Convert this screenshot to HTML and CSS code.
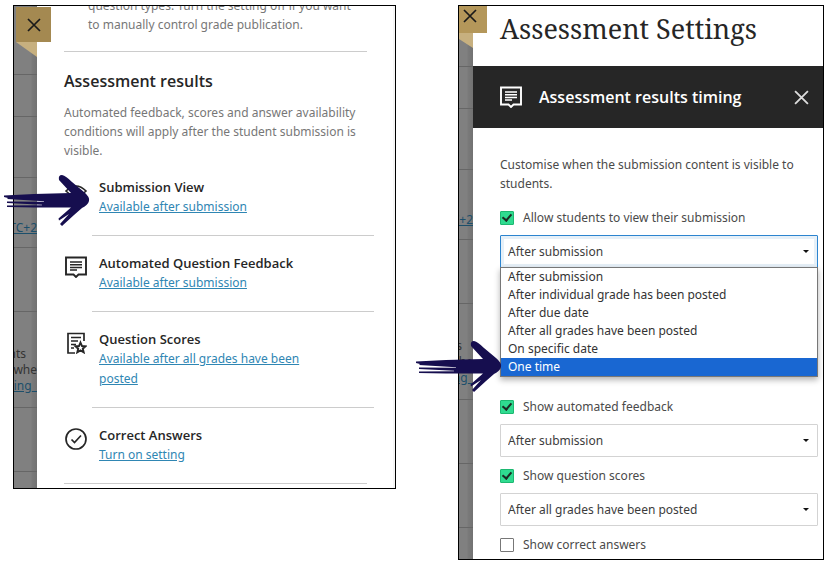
FILE: index.html
```html
<!DOCTYPE html>
<html lang="en">
<head>
  <meta charset="UTF-8">
  <meta name="viewport" content="width=device-width, initial-scale=1.0">
  <title>Assessment Settings</title>
  <link rel="stylesheet" href="styles.css">
</head>
<body>
  <svg class="sprite" aria-hidden="true">
    <symbol id="icon-arrow" viewBox="0 0 86 52">
      <path d="M0 20.500 L30 19 L67 18 L55 5 Q54 0 58 0 Q62 1 68 7 L80 17 Q86 22 85 26 Q84 30 78 33 L70 40 L58 51 L56 49 L65 39 L55 45.500 L54.500 43.500 L67 32.500 L46 32.500 L30 32.500 L3 32 L3 30.500 L38 30.300 L38 29.700 L3 28 L3 26.500 L40 26.800 L40 26.200 L3 24 L4 23 L0 22 Z"/>
    </symbol>
    <symbol id="icon-comment" viewBox="0 0 22 22">
      <path d="M1 1.500 H21 V18.500 H13.500 L11 21 L8.500 18.500 H1 Z" fill="none" stroke="currentColor" stroke-width="1.900"/>
      <path d="M5 6 H17 M5 8.700 H17 M5 11.400 H17 M5 14.100 H12" fill="none" stroke="currentColor" stroke-width="1.500"/>
    </symbol>
    <symbol id="icon-close" viewBox="0 0 14 14">
      <path d="M1 1 L13 13 M13 1 L1 13" fill="none" stroke="currentColor" stroke-width="1.700"/>
    </symbol>
  </svg>

  <main class="shots">
    <!-- Settings panel -->
    <section class="shot shot-left">
      <div class="frame">
        <div class="backdrop" aria-hidden="true">
          <div class="cell h68"></div>
          <div class="cell h42"></div>
          <div class="cell h60"></div>
          <div class="cell h70 cell-zone"><span class="fake-link">(UTC+2</span></div>
          <div class="cell h64"></div>
          <div class="cell h96 cell-text"><span class="short">nts</span><span>whe</span><span class="fake-link">ting_</span></div>
          <div class="cell h64"></div>
        </div>
        <div class="panel">
          <p class="setting-note">question types. Turn the setting off if you want to manually control grade publication.</p>
          <h2>Assessment results</h2>
          <p class="intro">Automated feedback, scores and answer availability conditions will apply after the student submission is visible.</p>
          <ul class="results">
            <li>
              <svg class="icon" viewBox="0 0 22 22"><path d="M1 11 Q11 1 21 11 Q11 21 1 11 Z" fill="none" stroke="currentColor" stroke-width="1.700"/><circle cx="11" cy="11" r="3" fill="currentColor"/></svg>
              <div class="result">
                <h3>Submission View</h3>
                <a href="#">Available after submission</a>
              </div>
            </li>
            <li>
              <svg class="icon"><use href="#icon-comment"/></svg>
              <div class="result">
                <h3>Automated Question Feedback</h3>
                <a href="#">Available after submission</a>
              </div>
            </li>
            <li>
              <svg class="icon" viewBox="0 0 22 22"><path d="M10 21 H3 V1.500 H19 V9 M6 5.500 H16 M6 9 H13 M6 12.500 H11 M6 16 H9" fill="none" stroke="currentColor" stroke-width="1.700"/><path d="M15.500 10.500 L17 14 L20.500 14.300 L17.800 16.700 L18.700 20.300 L15.500 18.400 L12.300 20.300 L13.200 16.700 L10.500 14.300 L14 14 Z" fill="none" stroke="currentColor" stroke-width="1.900"/></svg>
              <div class="result">
                <h3>Question Scores</h3>
                <a href="#">Available after all grades have been posted</a>
              </div>
            </li>
            <li>
              <svg class="icon" viewBox="0 0 22 22"><circle cx="11" cy="11" r="10" fill="none" stroke="currentColor" stroke-width="1.700"/><path d="M6.500 11.500 L9.500 14.500 L16 7.500" fill="none" stroke="currentColor" stroke-width="1.700"/></svg>
              <div class="result">
                <h3>Correct Answers</h3>
                <a href="#">Turn on setting</a>
              </div>
            </li>
          </ul>
        </div>
        <button class="tab" type="button" aria-label="Close"><svg><use href="#icon-close"/></svg></button>
      </div>
      <svg class="arrow"><use href="#icon-arrow"/></svg>
    </section>

    <!-- Results timing panel -->
    <section class="shot shot-right">
      <div class="frame">
        <div class="backdrop" aria-hidden="true">
          <div class="cell h60"></div>
          <div class="cell h42"></div>
          <div class="cell h60"></div>
          <div class="cell h70 cell-zone"><span class="fake-link">(UTC+2</span></div>
          <div class="cell h64"></div>
          <div class="cell h96 cell-text"><span class="short">nts</span><span>whe</span><span class="fake-link">ting_</span></div>
          <div class="cell h64"></div>
          <div class="cell h64"></div>
        </div>
        <div class="panel">
          <h1>Assessment Settings</h1>
          <header class="bar">
            <svg class="icon"><use href="#icon-comment"/></svg>
            <h2>Assessment results timing</h2>
            <button type="button" aria-label="Close panel"><svg><use href="#icon-close"/></svg></button>
          </header>
          <form class="timing">
            <p>Customise when the submission content is visible to students.</p>
            <div class="field field-open">
              <label class="check"><input type="checkbox" checked>Allow students to view their submission</label>
              <div class="select focused">
                <select aria-label="Submission view timing"><option>After submission</option></select>
                <ul class="menu" role="listbox" aria-label="Timing options">
                  <li role="option">After submission</li>
                  <li role="option">After individual grade has been posted</li>
                  <li role="option">After due date</li>
                  <li role="option">After all grades have been posted</li>
                  <li role="option">On specific date</li>
                  <li role="option" class="active" aria-selected="true">One time</li>
                </ul>
              </div>
            </div>
            <div class="field">
              <label class="check"><input type="checkbox" checked>Show automated feedback</label>
              <div class="select">
                <select aria-label="Automated feedback timing"><option>After submission</option></select>
              </div>
            </div>
            <div class="field">
              <label class="check"><input type="checkbox" checked>Show question scores</label>
              <div class="select">
                <select aria-label="Question scores timing"><option>After all grades have been posted</option></select>
              </div>
            </div>
            <div class="field">
              <label class="check"><input type="checkbox">Show correct answers</label>
            </div>
          </form>
        </div>
        <button class="tab" type="button" aria-label="Close"><svg><use href="#icon-close"/></svg></button>
      </div>
      <svg class="arrow"><use href="#icon-arrow"/></svg>
    </section>
  </main>
</body>
</html>
```

FILE: styles.css
```css
* {
  box-sizing: border-box;
}

body {
  margin: 0;
  background: #fff;
  color: #262626;
  font-family: "Noto Sans", "Open Sans", sans-serif;
  font-size: 12px;
  line-height: 19px;
}

h1, h2, h3, p, ul {
  margin: 0;
  padding: 0;
}

h2, h3 {
  font-family: "Open Sans", "Noto Sans", sans-serif;
  font-weight: 600;
}

ul {
  list-style: none;
}

button {
  display: flex;
  padding: 0;
  border: 0;
  background: none;
  color: inherit;
  cursor: pointer;
}

.sprite {
  position: absolute;
  width: 0;
  height: 0;
}

.shots {
  display: flex;
  align-items: flex-start;
  gap: 62px;
  padding: 5px 6px 4px 13px;
}

.shot {
  position: relative;
  min-width: 0;
}

.shot-left {
  flex: 383 1 0;
}

.shot-right {
  flex: 366 1 0;
}

.frame {
  position: relative;
  display: flex;
  overflow: hidden;
  border: 1px solid #000;
}

.panel {
  flex: 1;
  min-width: 0;
}

.icon {
  flex: none;
  width: 22px;
  height: 22px;
}

/* dimmed page behind the panel, never taller than the panel itself */
.backdrop {
  flex: none;
  contain: size;
  width: 23px;
  overflow: hidden;
  background: linear-gradient(to left, #727272, #7a7a7a 5px, #808080 6px);
  color: #333;
}

.shot-right .backdrop {
  width: 14px;
}

.cell {
  border-bottom: 1px solid #666;
  white-space: nowrap;
}

.h42 { height: 42px; }
.h60 { height: 61px; }
.h64 { height: 64px; }
.h68 { height: 69px; }
.h70 { height: 70px; }
.h96 { height: 96px; }

.cell-zone {
  display: flex;
  align-items: center;
  justify-content: flex-end;
  padding-top: 30px;
}

.cell-text {
  display: flex;
  flex-direction: column;
  align-items: flex-end;
  padding-top: 34px;
  line-height: 16px;
}

.cell-text .short {
  padding-right: 11px;
}

.fake-link {
  color: #1c4f6b;
  text-decoration: underline;
}

/* gold close tab with folded corner */
.tab {
  position: absolute;
  top: 1px;
  left: 2px;
  width: 35px;
  height: 35px;
  align-items: center;
  justify-content: center;
  background: #a48951;
  color: #1a1a1a;
}

.tab svg {
  width: 14px;
  height: 14px;
}

.tab::after {
  content: "";
  position: absolute;
  top: 100%;
  left: 0;
  width: 21px;
  height: 15px;
  background: #c7b07f;
  clip-path: polygon(0 0, 100% 0, 100% 100%);
}

.shot-right .tab {
  top: 0;
  left: 0;
  width: 28px;
  height: 27px;
  padding: 0 6px 8px 0;
  background: #b4975a;
}

.shot-right .tab::after {
  width: 14px;
  clip-path: polygon(0 0, 100% 0, 100% 100%, 0 40%);
}

.arrow {
  position: absolute;
  top: 170px;
  left: -9px;
  width: 86px;
  height: 52px;
  fill: #160e4f;
}

.shot-right .arrow {
  top: 336px;
  left: -42px;
}

/* settings panel */
.shot-left .panel {
  padding: 0 26px 4px 27px;
  border-right: 2px solid #f6f6f6;
}

.setting-note {
  margin-top: -10px;
  padding: 0 10px 17px 24px;
  border-bottom: 1px solid #ccc;
  color: #777;
}

.shot-left h2 {
  margin: 17px 0 10px;
  font-size: 16px;
  line-height: 24px;
}

.intro {
  color: #777;
}

.results {
  margin-right: -7px;
}

.results li {
  display: flex;
  gap: 5px;
  padding-left: 1px;
}

.results .icon {
  margin-top: 20px;
}

.result {
  flex: 1;
  padding: 18px 60px 18px 7px;
  border-bottom: 1px solid #ccc;
}

.results h3 {
  font-size: 13px;
  line-height: 19px;
}

.results a {
  display: block;
  color: #2f86b3;
  line-height: 20px;
}

.results li:last-child {
  margin-right: 7px;
  padding-left: 0;
  border-bottom: 1px solid #ccc;
}

.results li:last-child .icon {
  margin-left: 1px;
}

.results li:last-child .result {
  border-bottom: 0;
}

/* results timing panel */
h1 {
  padding: 5px 0 19px 27px;
  font-family: "Noto Serif", "DejaVu Serif", serif;
  font-size: 27px;
  font-weight: 400;
  line-height: 36px;
}

.bar {
  display: flex;
  align-items: center;
  gap: 17px;
  height: 62px;
  padding: 0 14px 0 27px;
  background: #262626;
  color: #fff;
}

.bar h2 {
  flex: 1;
  font-size: 16px;
  line-height: 24px;
}

.bar button {
  color: #ddd;
}

.bar button svg {
  width: 15px;
  height: 15px;
}

.timing {
  padding: 27px 5px 5px 27px;
  color: #4a4a4a;
}

.timing p {
  margin-bottom: 15px;
}

.field {
  display: flex;
  flex-direction: column;
  gap: 8px;
  margin-bottom: 9px;
}

.field:last-child {
  margin-bottom: 0;
}

/* leaves room for the open menu */
.field-open {
  margin-bottom: 129px;
}

.check {
  display: flex;
  align-items: center;
  gap: 9px;
}

.check input {
  appearance: none;
  flex: none;
  display: grid;
  place-items: center;
  width: 14px;
  height: 14px;
  margin: 0;
  border: 1px solid #777;
  border-radius: 1px;
}

.check input:checked {
  border-color: #1db871;
  background: #2fdb90;
}

.check input:checked::after {
  content: "";
  width: 4px;
  height: 7px;
  margin-bottom: 2px;
  border: solid #1c2b24;
  border-width: 0 2px 2px 0;
  transform: rotate(40deg);
}

.select {
  position: relative;
}

.select::after {
  content: "";
  position: absolute;
  top: 15px;
  right: 9px;
  border: solid transparent;
  border-width: 3px 3px 0;
  border-top-color: #111;
}

.select select {
  appearance: none;
  display: block;
  width: 100%;
  height: 33px;
  padding: 0 24px 0 7px;
  border: 1px solid #d3d3d3;
  border-radius: 1px;
  background: #fff;
  color: #3c3c3c;
  font: inherit;
}

.focused select {
  border-color: #2c84cf;
  box-shadow: inset 0 0 0 3px #e6f0f8;
}

.menu {
  position: absolute;
  top: calc(100% - 1px);
  left: 0;
  right: 0;
  border: 1px solid #777;
  background: #fff;
  box-shadow: 0 3px 6px rgba(0, 0, 0, 0.3);
  color: #333;
}

.menu li {
  padding-left: 7px;
  line-height: 18px;
}

.menu .active {
  background: #1967d2;
  color: #fff;
}
```
